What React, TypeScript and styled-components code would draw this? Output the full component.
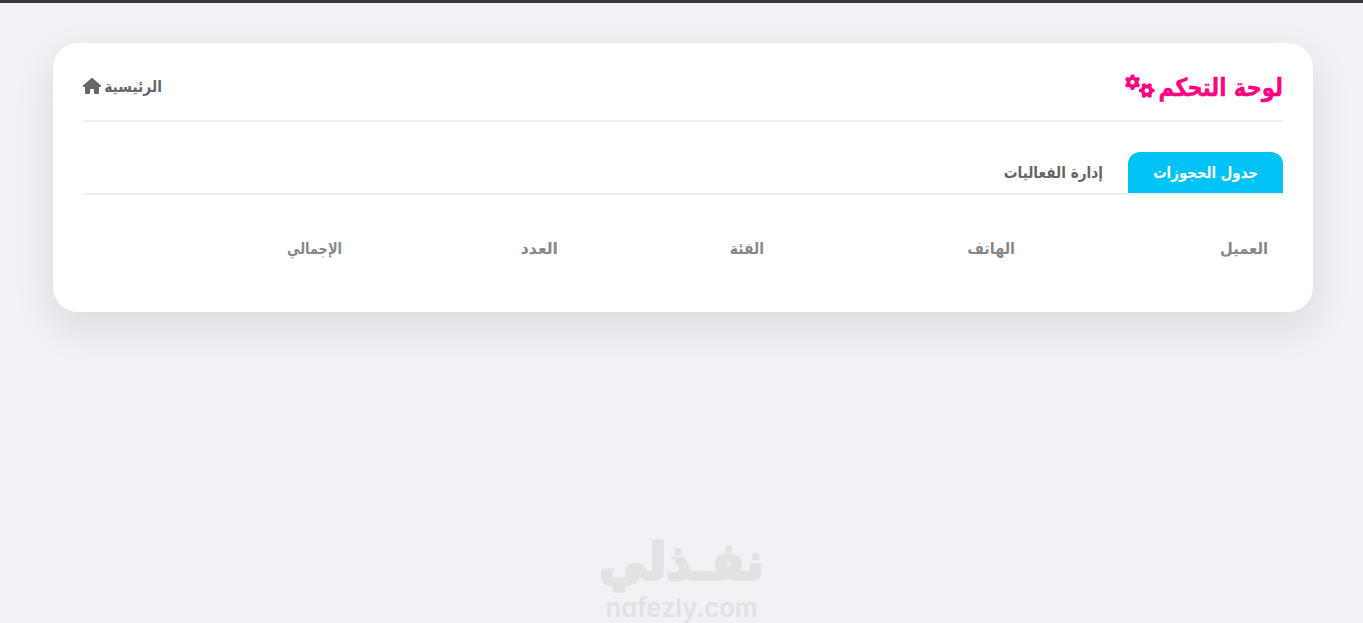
import React from "react";
import styled, { createGlobalStyle } from "styled-components";
import { FaGears, FaHouse } from "react-icons/fa6";

const GlobalStyle = createGlobalStyle`
  * { box-sizing: border-box; }
  body {
    margin: 0;
    background: #f0f2f6;
    font-family: "DejaVu Sans", sans-serif;
    overflow: hidden;
  }
`;

const Page = styled.div`
  height: 623px;
  display: flex;
  flex-direction: column;
  align-items: center;
  border-top: 3px solid #38373d;
`;

const Card = styled.main`
  width: 1260px;
  height: 269px;
  margin: 40px 0 0 3px;
  padding: 30px;
  background: #fff;
  border-radius: 25px;
  box-shadow: 0 15px 40px rgba(20, 20, 0, 0.1);
  flex: none;
`;

const Header = styled.header`
  height: 49px;
  display: flex;
  align-items: flex-start;
  justify-content: space-between;
  border-bottom: 2px solid #eee;
`;

/* Keeps a label at its condensed width; the glyphs are squeezed towards the right edge. */
const Label = styled.span<{ $width: number; $squeeze: number }>`
  display: block;
  width: ${(p) => p.$width}px;
  white-space: nowrap;
  transform: scaleX(${(p) => p.$squeeze});
  transform-origin: right center;
`;

const Title = styled.h1`
  margin: 0;
  height: 28px;
  display: flex;
  align-items: center;
  gap: 4px;
  font-size: 25px;
  line-height: 30px;
  font-weight: 700;
  color: #ff0080;
  -webkit-text-stroke: 0.4px #ff0080;

  ${Label} {
    padding-top: 2px;
  }
`;

const GearsIcon = styled(FaGears)`
  width: 30px;
  height: 24px;
  margin-bottom: 2px;
`;

const HomeLink = styled.a`
  height: 28px;
  display: flex;
  align-items: center;
  gap: 3px;
  font-size: 16px;
  font-weight: 700;
  color: #666;

  ${Label} {
    padding-bottom: 2px;
  }
`;

const HomeIcon = styled(FaHouse)`
  width: 18px;
  height: 16px;
  margin-bottom: 2px;
`;

const Tabs = styled.nav`
  margin-top: 30px;
  height: 43px;
  display: flex;
  border-bottom: 2px solid #eee;
`;

const Tab = styled.button<{ $active?: boolean }>`
  height: 41px;
  padding: 0 25px;
  border: 0;
  border-radius: 12px 12px 0 0;
  background: ${(p) => (p.$active ? "#00c3f5" : "transparent")};
  color: ${(p) => (p.$active ? "#fff" : "#666")};
  font: 700 16px "DejaVu Sans", sans-serif;
`;

const TableHead = styled.div`
  margin-top: 30px;
  height: 47px;
  display: grid;
  grid-template-columns: 253px 251px 206px 216px 274px;
  align-items: center;
  color: #888;
  font-size: 16px;
  font-weight: 700;
`;

const Cell = styled.div`
  padding: 0 15px;
`;

const Watermark = styled.footer`
  margin-top: auto;
  height: 96px;
  width: 164px;
  display: flex;
  flex-direction: column;
  align-items: center;
  color: #e0e2e4;
  font-weight: 700;
`;

const Brand = styled.div`
  width: 164px;
  height: 64px;
  font-size: 50px;
  line-height: 70px;
  -webkit-text-stroke: 3px #e0e2e4;
`;

const Domain = styled.div`
  font: 600 26px/34px Inter, sans-serif;
  font-feature-settings: "cv11";
  white-space: nowrap;
  direction: ltr;
  transform: scaleX(0.98);
`;

const columns = [
  { text: "العميل", width: 48, squeeze: 0.92 },
  { text: "الهاتف", width: 48, squeeze: 0.9 },
  { text: "الفئة", width: 34, squeeze: 0.87 },
  { text: "العدد", width: 38, squeeze: 0.98 },
  { text: "الإجمالي", width: 55, squeeze: 0.81 },
];

export default function App() {
  return (
    <Page dir="rtl">
      <GlobalStyle />
      <Card>
        <Header>
          <Title>
            <Label $width={124} $squeeze={0.845}>لوحة التحكم</Label>
            <GearsIcon />
          </Title>
          <HomeLink>
            <Label $width={58} $squeeze={0.87}>الرئيسية</Label>
            <HomeIcon />
          </HomeLink>
        </Header>
        <Tabs>
          <Tab $active>
            <Label $width={105} $squeeze={0.835}>جدول الحجوزات</Label>
          </Tab>
          <Tab>
            <Label $width={100} $squeeze={0.855}>إدارة الفعاليات</Label>
          </Tab>
        </Tabs>
        <TableHead>
          {columns.map((c) => (
            <Cell key={c.text}>
              <Label $width={c.width} $squeeze={c.squeeze}>{c.text}</Label>
            </Cell>
          ))}
        </TableHead>
      </Card>
      <Watermark>
        <Brand>
          <Label $width={164} $squeeze={0.97}>نفـذلي</Label>
        </Brand>
        <Domain>nafezly.com</Domain>
      </Watermark>
    </Page>
  );
}
